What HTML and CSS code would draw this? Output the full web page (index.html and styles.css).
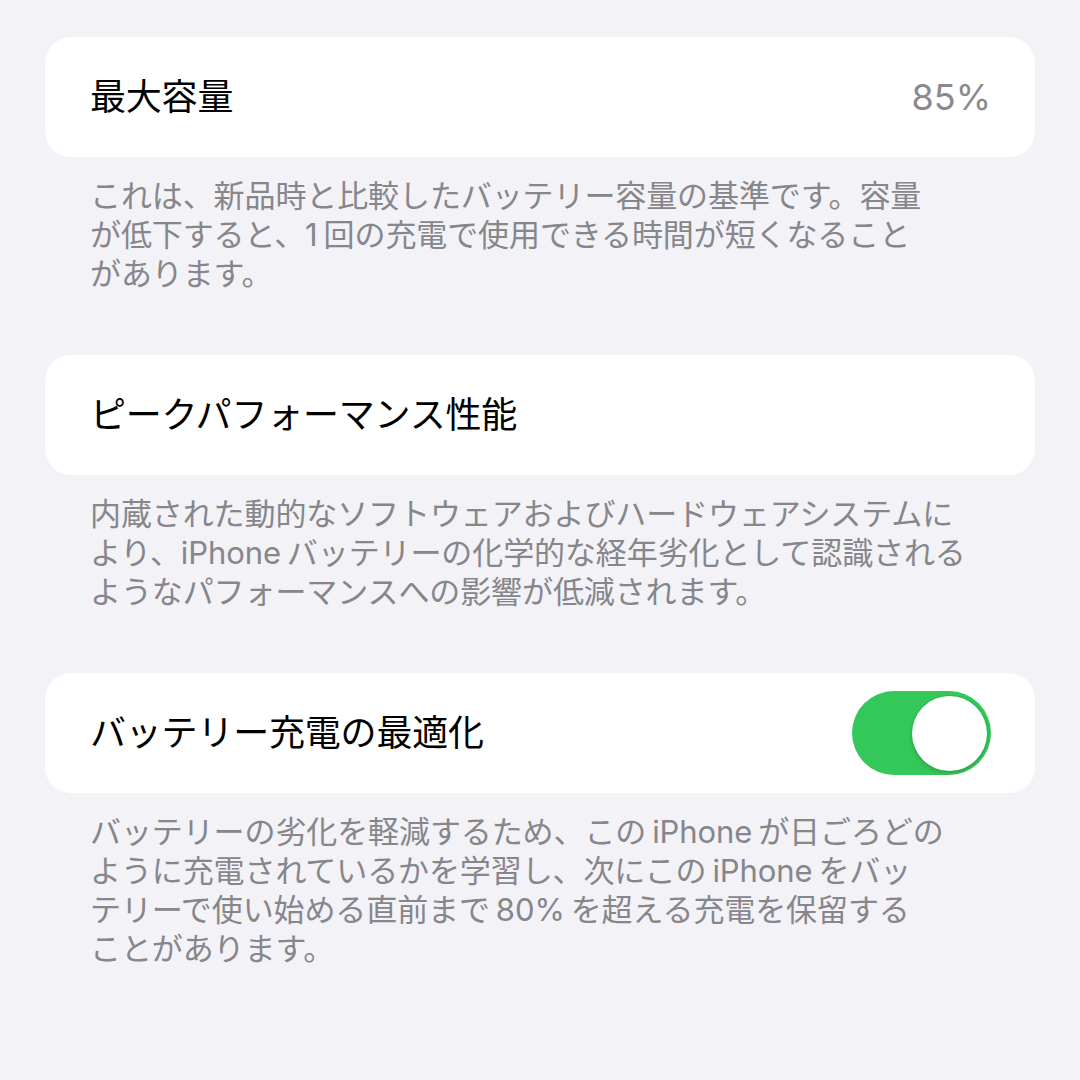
FILE: index.html
```html
<!DOCTYPE html>
<html lang="ja">
<head>
<meta charset="utf-8">
<title>バッテリーの状態</title>
<link rel="stylesheet" href="styles.css">
</head>
<body>
<main class="page">
  <section class="group">
    <div class="card">
      <span class="title">最大容量</span>
      <span class="value">85%</span>
    </div>
    <p class="footer">これは、新品時と比較したバッテリー容量の基準です。容量<br>が低下すると、<span class="latin lead">1</span>回の充電で使用できる時間が短くなること<br>があります。</p>
  </section>
  <section class="group">
    <div class="card">
      <span class="title">ピークパフォーマンス性能</span>
    </div>
    <p class="footer">内蔵された動的なソフトウェアおよびハードウェアシステムに<br>より、<span class="latin lead">iPhone</span>バッテリーの化学的な経年劣化として認識される<br>ようなパフォーマンスへの影響が低減されます。</p>
  </section>
  <section class="group">
    <div class="card">
      <span class="title">バッテリー充電の最適化</span>
      <span class="switch on" role="switch" aria-checked="true"><span class="knob"></span></span>
    </div>
    <p class="footer">バッテリーの劣化を軽減するため、この<span class="latin">iPhone</span>が日ごろどの<br>ように充電されているかを学習し、次にこの<span class="latin">iPhone</span>をバッ<br>テリーで使い始める直前まで<span class="latin">80%</span>を超える充電を保留する<br>ことがあります。</p>
  </section>
</main>
</body>
</html>
```

FILE: styles.css
```css
* { box-sizing: border-box; }
html, body {
  margin: 0;
  padding: 0;
  background: #f2f2f7;
}
body {
  width: 1080px;
  height: 1080px;
  overflow: hidden;
  font-family: Inter, "Noto Sans CJK JP", sans-serif;
}
.page {
  padding: 37px 45px 0;
  display: flex;
  flex-direction: column;
}
.group {
  display: flex;
  flex-direction: column;
}
.card {
  height: 120px;
  background: #ffffff;
  border-radius: 26px;
  padding: 0 44px 0 45px;
  display: flex;
  align-items: center;
  justify-content: space-between;
}
.title {
  font-size: 36px;
  color: #000000;
  line-height: 1;
  letter-spacing: -0.2px;
}
.value {
  font-size: 36px;
  color: #8a8a8e;
  line-height: 1;
}
.footer {
  margin: 0;
  padding: 19px 45px 62px;
  font-size: 31px;
  line-height: 39px;
  color: #86868b;
  letter-spacing: -0.1px;
}
.latin {
  margin: 0 6px;
}
.latin.lead {
  margin-left: 0;
}
.switch {
  width: 139px;
  height: 84px;
  border-radius: 42px;
  background: #34c759;
  position: relative;
  flex: none;
}
.switch .knob {
  position: absolute;
  top: 4.5px;
  right: 4.5px;
  width: 75px;
  height: 75px;
  border-radius: 50%;
  background: #ffffff;
  box-shadow: 0 2px 4px rgba(0, 0, 0, 0.18), 0 0 0 1px rgba(0, 0, 0, 0.05);
}
```
